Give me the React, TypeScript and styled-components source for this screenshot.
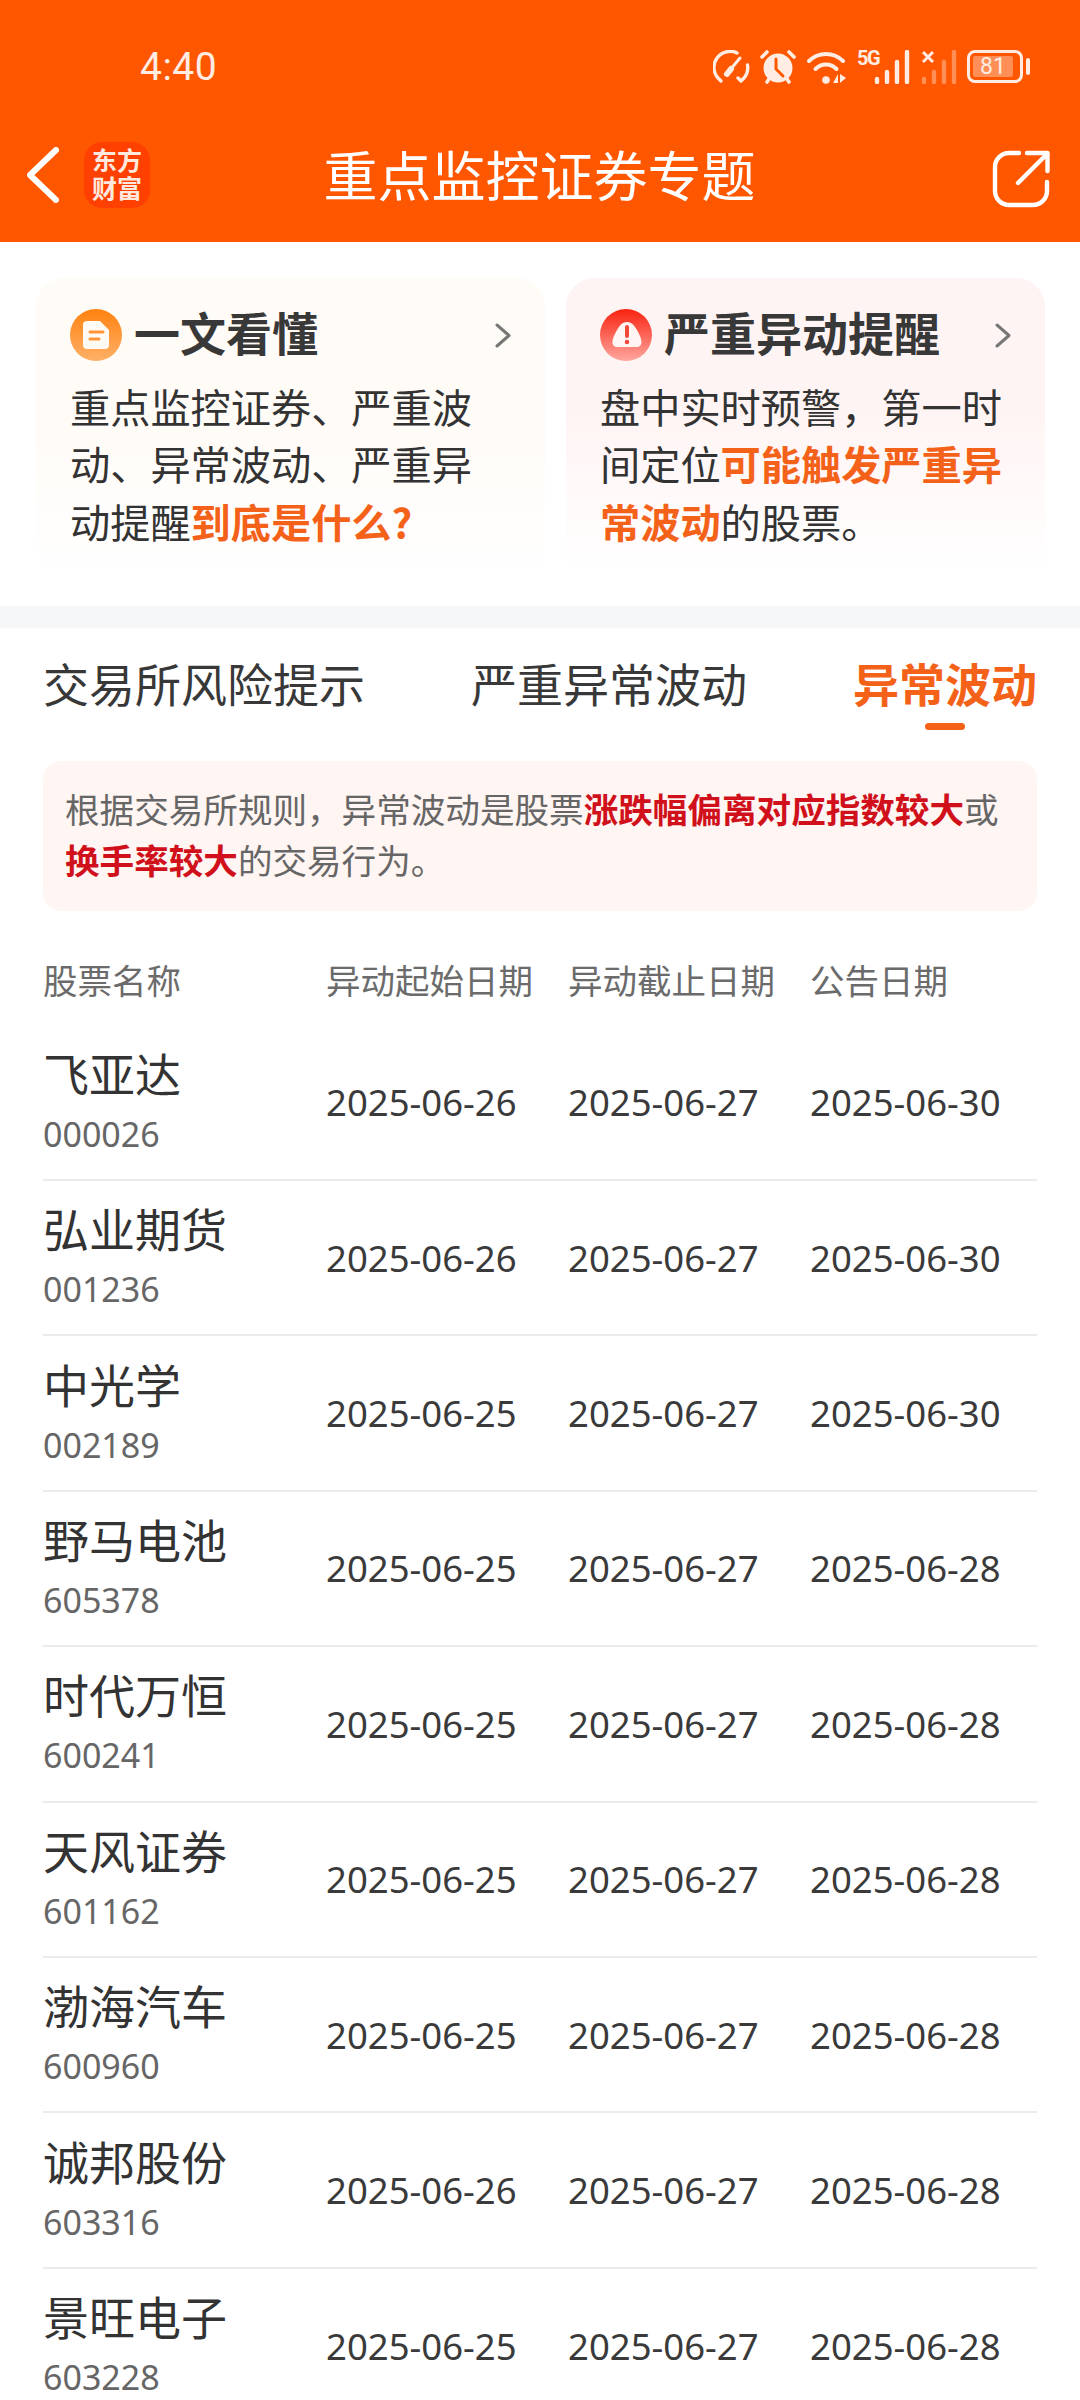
import React from 'react';
import styled, { createGlobalStyle } from 'styled-components';

interface StockRow {
  name: string;
  code: string;
  start: string;
  end: string;
  notice: string;
}

const stocks: StockRow[] = [
  { name: '飞亚达', code: '000026', start: '2025-06-26', end: '2025-06-27', notice: '2025-06-30' },
  { name: '弘业期货', code: '001236', start: '2025-06-26', end: '2025-06-27', notice: '2025-06-30' },
  { name: '中光学', code: '002189', start: '2025-06-25', end: '2025-06-27', notice: '2025-06-30' },
  { name: '野马电池', code: '605378', start: '2025-06-25', end: '2025-06-27', notice: '2025-06-28' },
  { name: '时代万恒', code: '600241', start: '2025-06-25', end: '2025-06-27', notice: '2025-06-28' },
  { name: '天风证券', code: '601162', start: '2025-06-25', end: '2025-06-27', notice: '2025-06-28' },
  { name: '渤海汽车', code: '600960', start: '2025-06-25', end: '2025-06-27', notice: '2025-06-28' },
  { name: '诚邦股份', code: '603316', start: '2025-06-26', end: '2025-06-27', notice: '2025-06-28' },
  { name: '景旺电子', code: '603228', start: '2025-06-25', end: '2025-06-27', notice: '2025-06-28' },
];

const GlobalStyle = createGlobalStyle`
  html, body {
    margin: 0;
    padding: 0;
    background: #fff;
  }
  * {
    box-sizing: border-box;
  }
`;

const Page = styled.div`
  width: 1080px;
  height: 2400px;
  overflow: hidden;
  background: #fff;
  color: #333;
  font-family: "Noto Sans CJK SC", "Noto Sans", sans-serif;
`;

// Orange top area
const Header = styled.header`
  height: 242px;
  background: #ff5600;
`;

const StatusBar = styled.div`
  height: 108px;
  padding: 25px 50px 0 140px;
  display: flex;
  align-items: center;
  justify-content: space-between;
  color: #ffece2;
`;

const Clock = styled.span`
  font-family: Roboto, sans-serif;
  font-size: 39px;
  line-height: 44px;
  letter-spacing: 0.5px;
`;

const StatusIcons = styled.div`
  display: flex;
  align-items: center;
  gap: 10.5px;
`;

const NetworkGroup = styled.div`
  position: relative;
  display: flex;
  align-items: flex-start;
`;

const NetworkLabel = styled.span`
  font-family: Roboto, sans-serif;
  font-size: 20px;
  line-height: 16px;
  font-weight: 700;
  width: 17px;
  letter-spacing: -1.4px;
`;

const NoSimMark = styled.svg`
  position: absolute;
  left: 0;
  top: 0;
`;

const Battery = styled.div`
  display: flex;
  align-items: center;
  gap: 3px;
`;

const BatteryShell = styled.div`
  width: 56px;
  height: 33px;
  border: 3px solid #ffece2;
  border-radius: 8px;
  padding: 3px 7px 3px 3px;
`;

const BatteryFill = styled.div`
  height: 100%;
  background: rgba(255, 255, 255, 0.34);
  border-radius: 2px;
  display: flex;
  align-items: center;
  justify-content: center;
  font-family: Roboto, sans-serif;
  font-size: 23px;
  line-height: 21px;
  color: #ffece2;
`;

const BatteryTip = styled.div`
  width: 4px;
  height: 17px;
  border-radius: 2px;
  background: #ffece2;
`;

const NavBar = styled.nav`
  height: 134px;
  padding: 0 30px 0 27px;
  display: grid;
  grid-template-columns: 1fr auto 1fr;
  align-items: center;
`;

const NavLeft = styled.div`
  display: flex;
  align-items: center;
  gap: 25px;
`;

const Logo = styled.div`
  width: 66px;
  height: 66px;
  border-radius: 18px;
  background: #ff4000;
  color: #ffe9df;
  font-size: 25px;
  line-height: 28px;
  font-weight: 700;
  text-align: center;
  padding-top: 3px;
`;

const NavTitle = styled.h1`
  margin: -2px 0 0 2px;
  font-size: 54px;
  line-height: 70px;
  font-weight: 400;
  color: #fff;
`;

const ShareButton = styled.div`
  justify-self: end;
  display: flex;
  margin-top: 7px;
`;

// Two intro cards
const IntroSection = styled.section`
  height: 364px;
  padding: 36px 35px 0 36px;
  display: grid;
  grid-template-columns: 509px 479px;
  column-gap: 21px;
`;

const IntroCard = styled.div<{ $tint: string }>`
  height: 296px;
  padding: 31px 34px 0;
  border-radius: 28px 28px 0 0;
  background: linear-gradient(180deg, ${p => p.$tint} 0%, ${p => p.$tint} 45%, #fff 100%);
`;

const CardHead = styled.div`
  display: flex;
  align-items: center;
  height: 52px;
`;

const CardTitle = styled.h2`
  margin: -9px 0 0 12px;
  font-size: 46px;
  line-height: 52px;
  font-weight: 700;
  color: #383838;
  flex: 1;
`;

const CardBody = styled.p`
  margin: 15.5px 0 0;
  width: 412px;
  font-size: 40.2px;
  line-height: 57.5px;
  color: #333;
`;

const Accent = styled.b`
  font-weight: 700;
  color: #f4621a;
`;

const Band = styled.div`
  height: 22px;
  background: #f6f7f9;
`;

const Content = styled.main`
  padding: 0 43px;
`;

const Tabs = styled.div`
  display: flex;
  justify-content: space-between;
  padding-top: 24px;
  margin-bottom: 31px;
`;

const Tab = styled.div<{ $active?: boolean }>`
  height: 78px;
  display: flex;
  flex-direction: column;
  align-items: center;
  font-size: 46px;
  line-height: 60px;
  font-weight: ${p => (p.$active ? 700 : 400)};
  color: ${p => (p.$active ? '#f4621a' : '#383838')};

  &::after {
    content: '';
    display: ${p => (p.$active ? 'block' : 'none')};
    width: 40px;
    height: 7px;
    margin-top: 11px;
    border-radius: 4px;
    background: #f4621a;
  }
`;

const Notice = styled.div`
  padding: 22px 22px 26px;
  border-radius: 18px;
  background: #fff5f2;
  font-size: 34.6px;
  line-height: 51px;
  color: #666;
`;

const Alert = styled.b`
  font-weight: 700;
  color: #d0111b;
`;

const TableHead = styled.div`
  margin-top: 43px;
  padding-bottom: 21.5px;
  display: grid;
  grid-template-columns: 283px 242px 242px 1fr;
  font-size: 34.5px;
  line-height: 50px;
  color: #6b6b6b;
`;

const Row = styled.div`
  height: 155.43px;
  display: grid;
  grid-template-columns: 283px 242px 242px 1fr;
  align-items: center;
  border-bottom: 2px solid #ebebeb;
`;

const NameCell = styled.div`
  display: flex;
  flex-direction: column;
  gap: 11px;
  padding-bottom: 6px;
`;

const StockName = styled.div`
  font-size: 46px;
  line-height: 58px;
  color: #333;
`;

const StockCode = styled.div`
  font-family: "Noto Sans", sans-serif;
  font-size: 34px;
  line-height: 44px;
  color: #666;
`;

const DateCell = styled.div`
  font-family: "Noto Sans", sans-serif;
  font-size: 36.5px;
  line-height: 50px;
  color: #3a3a3a;
`;

const GaugeIcon = () => (
  <svg width="37" height="34" viewBox="0 0 37 34" fill="none" stroke="#ffece2" strokeWidth="3.4" strokeLinecap="round" strokeLinejoin="round">
    <path d="M8 31 L5 28 A16 16 0 0 1 24 3" />
    <path d="M14.5 23 L27 8" strokeWidth="3" />
    <path d="M14 24 L18 19" strokeWidth="6" />
    <path d="M34.5 15 A16 16 0 0 1 31 28 L28 31 L25 28" />
  </svg>
);

const AlarmIcon = () => (
  <svg width="36" height="34" viewBox="0 0 36 34" fill="none" strokeLinecap="round">
    <circle cx="18" cy="18" r="14.5" fill="#ffece2" />
    <path d="M2 7 L7 2 M29 2 L34 7 M7 32 L9 29 M29 32 L27 29" stroke="#ffece2" strokeWidth="3.6" />
    <path d="M16 9 V19 L23 26" stroke="#ff5600" strokeWidth="3" />
  </svg>
);

const WifiIcon = () => (
  <svg width="40" height="34" viewBox="0 0 40 34" fill="none" stroke="#ffece2" strokeLinecap="round">
    <path d="M2 11 A24 24 0 0 1 36 11" strokeWidth="4" />
    <path d="M8.5 19 A14.5 14.5 0 0 1 29.5 19" strokeWidth="4" />
    <circle cx="19" cy="30" r="3.8" fill="#ffece2" stroke="none" />
    <path d="M31 24 V33 H26 Z M33 24 V33 L39 28 Z" fill="#ffece2" stroke="none" />
  </svg>
);

const SignalIcon = ({ opacity = 1 }: { opacity?: number }) => (
  <svg width="36" height="34" viewBox="0 0 36 34" stroke="#ffece2" strokeWidth="4.4" strokeLinecap="round" opacity={opacity}>
    <path d="M3 29 V32 M13 22 V32 M23 12 V32 M33 2 V32" />
  </svg>
);

const BackIcon = () => (
  <svg width="32" height="56" viewBox="0 0 32 56" fill="none" stroke="#fff" strokeWidth="6" strokeLinecap="round" strokeLinejoin="round">
    <path d="M29 3 L3 28 L29 53" />
  </svg>
);

const ShareIcon = () => (
  <svg width="58" height="58" viewBox="0 0 58 58" fill="none" stroke="#fff" strokeWidth="4.4" strokeLinecap="round" strokeLinejoin="round">
    <path d="M27 3 H17 A14 14 0 0 0 3 17 V41 A14 14 0 0 0 17 55 H41 A14 14 0 0 0 55 41 V32" />
    <path d="M26 33 L55 4" />
    <path d="M35 3 H55.5 V21" />
  </svg>
);

const DocBadge = () => (
  <svg width="52" height="52" viewBox="0 0 52 52" fill="none">
    <defs>
      <linearGradient id="docFill" x1="0" y1="0" x2="0" y2="1">
        <stop offset="0" stopColor="#ff8210" />
        <stop offset="1" stopColor="#ffb067" />
      </linearGradient>
    </defs>
    <circle cx="26" cy="26" r="26" fill="url(#docFill)" />
    <path d="M17 12 H30 L39 21 V36 A4 4 0 0 1 35 40 H17 A4 4 0 0 1 13 36 V16 A4 4 0 0 1 17 12 Z" fill="#fffaf4" />
    <path d="M20 23 H33 M20 30 H29" stroke="#ff9536" strokeWidth="3" strokeLinecap="round" />
  </svg>
);

const WarnBadge = () => (
  <svg width="52" height="52" viewBox="0 0 52 52" fill="none">
    <defs>
      <linearGradient id="warnFill" x1="0" y1="0" x2="0" y2="1">
        <stop offset="0" stopColor="#f9220f" />
        <stop offset="1" stopColor="#ffa79f" />
      </linearGradient>
    </defs>
    <circle cx="26" cy="26" r="26" fill="url(#warnFill)" />
    <path d="M27 13 C32 13 35 17 38 23 C42 30 44 38 36 38 H18 C10 38 12 30 16 23 C19 17 22 13 27 13 Z" fill="#fff6f4" />
    <path d="M27 18 V27" stroke="#f2483a" strokeWidth="4" strokeLinecap="round" />
    <circle cx="27" cy="33" r="2.3" fill="#f2483a" />
  </svg>
);

const CardArrow = () => (
  <svg width="16" height="25" viewBox="0 0 16 25" fill="none" stroke="#777" strokeWidth="3" strokeLinecap="round" strokeLinejoin="round">
    <path d="M2 2 L14 12.5 L2 23" />
  </svg>
);

const App: React.FC = () => {
  return (
    <Page>
      <GlobalStyle />
      <Header>
        <StatusBar>
          <Clock>4:40</Clock>
          <StatusIcons>
            <GaugeIcon />
            <AlarmIcon />
            <WifiIcon />
            <NetworkGroup>
              <NetworkLabel>5G</NetworkLabel>
              <SignalIcon />
            </NetworkGroup>
            <NetworkGroup>
              <SignalIcon opacity={0.38} />
              <NoSimMark width="14" height="14" viewBox="0 0 14 14" stroke="#ffece2" strokeWidth="3">
                <path d="M2 2 L12 12 M12 2 L2 12" />
              </NoSimMark>
            </NetworkGroup>
            <Battery>
              <BatteryShell>
                <BatteryFill>81</BatteryFill>
              </BatteryShell>
              <BatteryTip />
            </Battery>
          </StatusIcons>
        </StatusBar>
        <NavBar>
          <NavLeft>
            <BackIcon />
            <Logo>
              东方
              <br />
              财富
            </Logo>
          </NavLeft>
          <NavTitle>重点监控证券专题</NavTitle>
          <ShareButton>
            <ShareIcon />
          </ShareButton>
        </NavBar>
      </Header>

      <IntroSection>
        <IntroCard $tint="#fffbf6">
          <CardHead>
            <DocBadge />
            <CardTitle>一文看懂</CardTitle>
            <CardArrow />
          </CardHead>
          <CardBody>
            重点监控证券、严重波动、异常波动、严重异动提醒<Accent>到底是什么?</Accent>
          </CardBody>
        </IntroCard>
        <IntroCard $tint="#fff4f4">
          <CardHead>
            <WarnBadge />
            <CardTitle>严重异动提醒</CardTitle>
            <CardArrow />
          </CardHead>
          <CardBody>
            盘中实时预警，第一时间定位<Accent>可能触发严重异常波动</Accent>的股票。
          </CardBody>
        </IntroCard>
      </IntroSection>
      <Band />

      <Content>
        <Tabs>
          <Tab>交易所风险提示</Tab>
          <Tab>严重异常波动</Tab>
          <Tab $active>异常波动</Tab>
        </Tabs>
        <Notice>
          根据交易所规则，异常波动是股票<Alert>涨跌幅偏离对应指数较大</Alert>或
          <Alert>换手率较大</Alert>的交易行为。
        </Notice>
        <TableHead>
          <div>股票名称</div>
          <div>异动起始日期</div>
          <div>异动截止日期</div>
          <div>公告日期</div>
        </TableHead>
        {stocks.map(stock => (
          <Row key={stock.code}>
            <NameCell>
              <StockName>{stock.name}</StockName>
              <StockCode>{stock.code}</StockCode>
            </NameCell>
            <DateCell>{stock.start}</DateCell>
            <DateCell>{stock.end}</DateCell>
            <DateCell>{stock.notice}</DateCell>
          </Row>
        ))}
      </Content>
    </Page>
  );
};

export default App;
